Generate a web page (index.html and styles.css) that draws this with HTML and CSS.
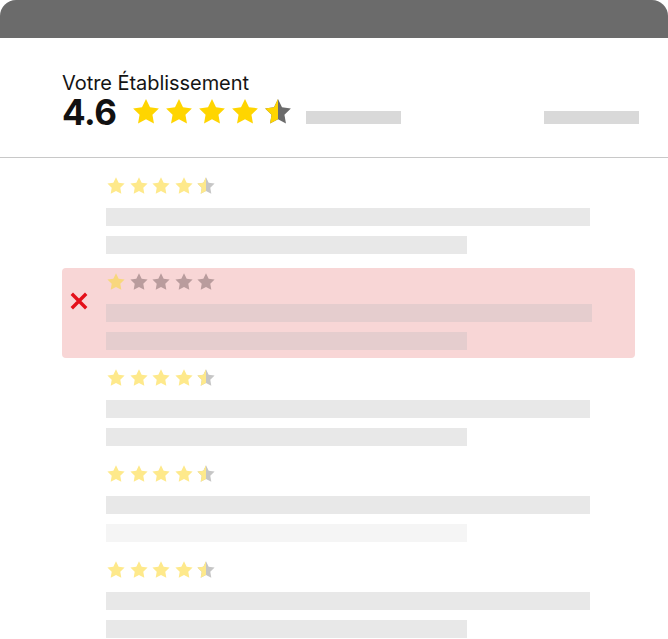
FILE: index.html
```html
<!DOCTYPE html>
<html lang="fr">
<head>
<meta charset="utf-8">
<title>Avis</title>
<link rel="stylesheet" href="styles.css">
</head>
<body>
<svg class="defs" width="0" height="0" aria-hidden="true">
  <defs>
    <path id="star" d="M12 1.6l3.2 6.5 7.1 1-5.15 5 1.22 7.1L12 17.85l-6.37 3.35 1.22-7.1-5.15-5 7.1-1z"/>
    <clipPath id="lefthalf"><rect x="0" y="0" width="12" height="24"/></clipPath>
  </defs>
</svg>
<div class="card">
  <div class="topbar"></div>
  <header class="header">
    <div class="title">Votre Établissement</div>
    <div class="rating">
      <span class="score">4.6</span>
      <div class="stars big">
        <svg viewBox="0 0 24 24"><use href="#star" class="on"/></svg>
        <svg viewBox="0 0 24 24"><use href="#star" class="on"/></svg>
        <svg viewBox="0 0 24 24"><use href="#star" class="on"/></svg>
        <svg viewBox="0 0 24 24"><use href="#star" class="on"/></svg>
        <svg viewBox="0 0 24 24"><use href="#star" class="off"/><use href="#star" class="on" clip-path="url(#lefthalf)"/></svg>
      </div>
      <span class="hbar"></span>
      <span class="hbar right"></span>
    </div>
  </header>
  <div class="reviews">
    <div class="review">
      <div class="icon"></div>
      <div class="body">
        <div class="stars small">
          <svg viewBox="0 0 24 24"><use href="#star" class="on"/></svg>
          <svg viewBox="0 0 24 24"><use href="#star" class="on"/></svg>
          <svg viewBox="0 0 24 24"><use href="#star" class="on"/></svg>
          <svg viewBox="0 0 24 24"><use href="#star" class="on"/></svg>
          <svg viewBox="0 0 24 24"><use href="#star" class="off"/><use href="#star" class="on" clip-path="url(#lefthalf)"/></svg>
        </div>
        <span class="line long"></span>
        <span class="line short"></span>
      </div>
    </div>
    <div class="review bad">
      <div class="icon">
        <svg viewBox="0 0 18 18" class="cross"><path d="M1.8 1.8l14.4 14.4M16.2 1.8l-14.4 14.4"/></svg>
      </div>
      <div class="body">
        <div class="stars small">
          <svg viewBox="0 0 24 24"><use href="#star" class="on"/></svg>
          <svg viewBox="0 0 24 24"><use href="#star" class="off"/></svg>
          <svg viewBox="0 0 24 24"><use href="#star" class="off"/></svg>
          <svg viewBox="0 0 24 24"><use href="#star" class="off"/></svg>
          <svg viewBox="0 0 24 24"><use href="#star" class="off"/></svg>
        </div>
        <span class="line long"></span>
        <span class="line short"></span>
      </div>
    </div>
    <div class="review">
      <div class="icon"></div>
      <div class="body">
        <div class="stars small">
          <svg viewBox="0 0 24 24"><use href="#star" class="on"/></svg>
          <svg viewBox="0 0 24 24"><use href="#star" class="on"/></svg>
          <svg viewBox="0 0 24 24"><use href="#star" class="on"/></svg>
          <svg viewBox="0 0 24 24"><use href="#star" class="on"/></svg>
          <svg viewBox="0 0 24 24"><use href="#star" class="off"/><use href="#star" class="on" clip-path="url(#lefthalf)"/></svg>
        </div>
        <span class="line long"></span>
        <span class="line short"></span>
      </div>
    </div>
    <div class="review">
      <div class="icon"></div>
      <div class="body">
        <div class="stars small">
          <svg viewBox="0 0 24 24"><use href="#star" class="on"/></svg>
          <svg viewBox="0 0 24 24"><use href="#star" class="on"/></svg>
          <svg viewBox="0 0 24 24"><use href="#star" class="on"/></svg>
          <svg viewBox="0 0 24 24"><use href="#star" class="on"/></svg>
          <svg viewBox="0 0 24 24"><use href="#star" class="off"/><use href="#star" class="on" clip-path="url(#lefthalf)"/></svg>
        </div>
        <span class="line long"></span>
        <span class="line short faint"></span>
      </div>
    </div>
    <div class="review">
      <div class="icon"></div>
      <div class="body">
        <div class="stars small">
          <svg viewBox="0 0 24 24"><use href="#star" class="on"/></svg>
          <svg viewBox="0 0 24 24"><use href="#star" class="on"/></svg>
          <svg viewBox="0 0 24 24"><use href="#star" class="on"/></svg>
          <svg viewBox="0 0 24 24"><use href="#star" class="on"/></svg>
          <svg viewBox="0 0 24 24"><use href="#star" class="off"/><use href="#star" class="on" clip-path="url(#lefthalf)"/></svg>
        </div>
        <span class="line long"></span>
        <span class="line short"></span>
      </div>
    </div>
  </div>
</div>
</body>
</html>
```

FILE: styles.css
```css
html, body {
  margin: 0;
  padding: 0;
  background: #ffffff;
}
body {
  font-family: Inter, "Noto Sans", "Liberation Sans", sans-serif;
  color: #111111;
  width: 668px;
  height: 639px;
  overflow: hidden;
}
.defs {
  position: absolute;
  width: 0;
  height: 0;
}
.card {
  background: #ffffff;
}
.topbar {
  height: 38px;
  background: #6b6b6b;
  border-radius: 16px 16px 0 0;
}
.header {
  padding: 33px 29px 28px 62px;
  border-bottom: 1px solid #c8c8c8;
}
.title {
  font-size: 20px;
  line-height: 24px;
  font-weight: 400;
  letter-spacing: -0.05px;
  color: #141414;
}
.rating {
  display: flex;
  align-items: center;
  height: 34px;
}
.score {
  font-size: 35px;
  line-height: 34px;
  font-weight: 700;
  letter-spacing: -0.5px;
  margin-right: 15px;
}
.stars {
  display: flex;
}
.stars svg {
  display: block;
}
.stars.big {
  gap: 3px;
}
.stars.big svg {
  width: 30px;
  height: 30px;
}
.stars.big .on { fill: #ffd500; }
.stars.big .off { fill: #6b6b6b; }
.hbar {
  align-self: flex-end;
  margin: 0 0 5px 13px;
  width: 95px;
  height: 13px;
  background: #d9d9d9;
}
.hbar.right {
  margin-left: auto;
}
.reviews {
  padding-top: 14px;
}
.review {
  display: grid;
  grid-template-columns: 44px 1fr;
  margin: 0 33px 6px 62px;
  padding: 4px 0 8px 0;
  border-radius: 4px;
}
.icon {
  padding: 25px 0 0 8px;
}
.cross {
  display: block;
  width: 18px;
  height: 18px;
  fill: none;
  stroke: #e4101a;
  stroke-width: 3.4;
}
.body {
  display: flex;
  flex-direction: column;
}
.stars.small {
  gap: 2.5px;
  height: 20px;
  margin-bottom: 12px;
}
.stars.small svg {
  width: 20px;
  height: 20px;
}
.stars.small .on { fill: #fee98b; }
.stars.small .off { fill: #c6c6c6; }
.line {
  display: block;
  height: 18px;
  background: #e8e8e8;
}
.line.long {
  width: 484px;
  margin-bottom: 10px;
}
.line.short {
  width: 361px;
}
.line.faint {
  background: #f5f5f5;
}
.review.bad {
  background: #f8d6d6;
}
.review.bad .icon {
  padding-top: 20px;
}
.review.bad .stars.small .on { fill: #f8d77d; }
.review.bad .stars.small .off { fill: #b99c9d; }
.review.bad .line {
  background: #e5cdce;
}
.review.bad .line.long {
  width: 486px;
}
```
